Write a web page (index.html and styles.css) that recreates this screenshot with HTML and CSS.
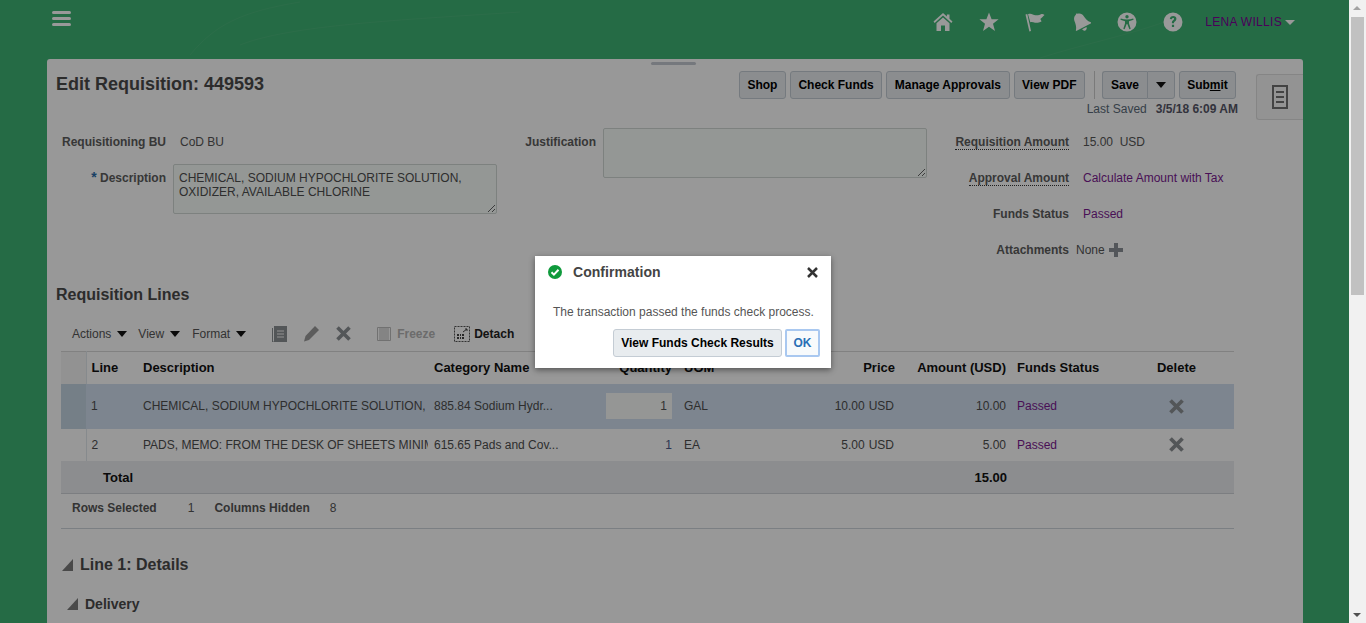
FILE: index.html
```html
<!DOCTYPE html>
<html lang="en">
<head>
<meta charset="utf-8">
<title>Edit Requisition: 449593</title>
<link rel="stylesheet" href="styles.css">
</head>
<body>
<div class="page">
  <svg class="swoosh" width="1349" height="59" viewBox="0 0 1349 59"><path d="M190 55C215 25 240 12 300 2M240 45C290 25 400 20 520 12M1040 58C1080 45 1130 35 1170 20"/></svg>
  <header class="topbar">
    <div class="burger"><span></span><span></span><span></span></div>
    <nav class="topnav">
      <svg class="navicon" viewBox="0 0 20 20"><path d="M10 1 0.500 9.500l1.200 1.400L10 3.600l8.300 7.300 1.200-1.400L16.500 6.800V2.500h-2.600v2z"/><path d="M3.500 11.300 10 5.500l6.500 5.800V19h-4.500v-5.500H8V19H3.500z"/></svg>
      <svg class="navicon" viewBox="0 0 20 20"><path d="M10 .500l2.600 6.700h7l-5.600 4.500 2 7.300-6-4.200-6 4.200 2-7.300L.400 7.200h7z"/></svg>
      <svg class="navicon" viewBox="0 0 20 20"><path d="M.500 2.500 2.300 2 6 19l-1.600.5z"/><path d="M3 2.200C6 .800 8 2.800 10.500 3.200c2 .3 4.500-.3 6-1.200 1 0 2.300.4 3 .9-1.300 1.300-3.200 3-4.200 4.100.6 1 1 1.600 1.200 2.400-2 1-4.500 1.700-6.500 1.300-1.600-.3-3-.9-4.700-.4z"/></svg>
      <svg class="navicon" viewBox="0 0 20 20"><g transform="rotate(-28 10 10)"><path d="M8.800 .500c.8-.5 1.800-.2 2.100.7 2.700.5 4 2.500 4.300 5 .3 3 .800 6 3.300 8.600.3.500 0 1-.6 1H2.100c-.6 0-.9-.5-.5-1 2.300-2.600 2.800-5.600 3.100-8.600.3-2.500 1.700-4.500 4.300-5 0-.3.200-.5.400-.7z"/><path d="M7.500 17h5c-.2 1.500-1.200 2.500-2.500 2.500S7.700 18.500 7.500 17z"/></g></svg>
      <svg class="navicon" viewBox="0 0 20 20"><path fill-rule="evenodd" d="M10 0.500a9.500 9.500 0 1 1 0 19 9.500 9.500 0 0 1 0-19zM10 3a1.700 1.700 0 1 0 0 3.400A1.700 1.700 0 0 0 10 3zM3.800 6.400l-.4 1.300 4.600 1.500v2.400l-1.700 5.200 1.300.5L9.700 12h.6l2.100 5.300 1.300-.5-1.700-5.200V9.200l4.600-1.500-.4-1.300c-2 .6-4 1.100-6.200 1.100S5.800 7 3.800 6.400z"/></svg>
      <svg class="navicon" viewBox="0 0 20 20"><path fill-rule="evenodd" d="M10 0.500a9.500 9.500 0 1 1 0 19 9.500 9.500 0 0 1 0-19zM10.200 4C8.300 4 7 5 6.800 6.900l2.200.3c.1-.9.500-1.300 1.100-1.300.6 0 1 .4 1 .9 0 .6-.4.900-1 1.400-.9.700-1.200 1.300-1.200 2.500v.6h2.100v-.4c0-.6.200-.9.900-1.400.9-.7 1.500-1.400 1.500-2.700C13.400 5 12.100 4 10.200 4zM8.900 12.800V15h2.200v-2.200z"/></svg>
      <span class="user">LENA WILLIS<i class="usercaret"></i></span>
    </nav>
  </header>

  <main class="panel">
    <div class="handle"></div>
    <div class="drawer">
      <svg width="16" height="24" viewBox="0 0 16 24"><path fill="none" stroke="#707070" stroke-width="2" d="M1 1h14v22H1zM4 7h8M4 12h8M4 17h8"/></svg>
    </div>

    <div class="head">
      <h1 class="title">Edit Requisition: 449593</h1>
      <div class="actions">
        <div class="btnrow">
          <button class="btn">Shop</button>
          <button class="btn">Check Funds</button>
          <button class="btn">Manage Approvals</button>
          <button class="btn">View PDF</button>
          <span class="vsep"></span>
          <div class="split"><button class="btn save">Save</button><button class="btn drop"><i class="caret"></i></button></div>
          <button class="btn submit">Sub<u>m</u>it</button>
        </div>
        <div class="saved"><span>Last Saved</span><span class="savedate">3/5/18 6:09 AM</span></div>
      </div>
    </div>

    <section class="form">
      <div class="fcol fleft">
        <div class="frow short"><label class="lab">Requisitioning BU</label><span class="val bu">CoD BU</span></div>
        <div class="frow top"><label class="lab"><b class="req">*</b> Description</label><textarea class="area" readonly>CHEMICAL, SODIUM HYPOCHLORITE SOLUTION, OXIDIZER, AVAILABLE CHLORINE</textarea></div>
      </div>
      <div class="fcol fmid">
        <div class="frow top"><label class="lab">Justification</label><textarea class="area" readonly></textarea></div>
      </div>
      <div class="fcol fright">
        <div class="rrow"><span class="lab dotted">Requisition Amount</span><span class="val">15.00&nbsp; USD</span></div>
        <div class="rrow"><span class="lab dotted">Approval Amount</span><span class="val link">Calculate Amount with Tax</span></div>
        <div class="rrow"><span class="lab">Funds Status</span><span class="val link">Passed</span></div>
        <div class="rrow attach"><span class="lab">Attachments</span><span class="val">None</span>
          <svg class="plus" width="14" height="14" viewBox="0 0 14 14"><path fill="#8b9096" d="M5 0h4v5h5v4H9v5H5V9H0V5h5z"/></svg></div>
      </div>
    </section>

    <h2 class="lines">Requisition Lines</h2>

    <div class="toolbar">
      <span class="menu m1">Actions<i class="caret"></i></span>
      <span class="menu m2">View<i class="caret"></i></span>
      <span class="menu m3">Format<i class="caret"></i></span>
      <svg class="tool t1" width="15" height="16" viewBox="0 0 15 16"><path fill="#8b8f93" d="M2 0h13v16H2z"/><path fill="none" stroke="#8b8f93" d="M.5 2v14h2"/><path stroke="#f5f5f5" stroke-width="1.200" d="M5 5h7M5 8h7M5 11h7"/></svg>
      <svg class="tool t2" width="17" height="17" viewBox="0 0 17 17"><path fill="#9a9a9a" d="M12 1l4 4L6 15l-5 1.500L2.500 11z"/></svg>
      <svg class="tool t3" width="15" height="15" viewBox="0 0 15 15"><path stroke="#8b8f93" stroke-width="3.600" d="M1.500 1.500l12 12M13.500 1.500l-12 12"/></svg>
      <span class="freeze"><svg width="14" height="14" viewBox="0 0 14 14"><path fill="none" stroke="#bdbdbd" d="M.5.500h13v13H.5zM5 1v12M7 1v12M9 1v12M11 1v12M3 1v12"/></svg>Freeze</span>
      <span class="detach"><svg width="16" height="16" viewBox="0 0 16 16"><path fill="none" stroke="#555" stroke-dasharray="2 1" d="M.5.500h15v15H.5z"/><path fill="#444" d="M3 8h7v5H3z"/><path stroke="#fff" d="M3 10.500h7M5.500 8v5M7.500 8v5"/><path stroke="#444" d="M9 6l4-3M11 3h2v2" fill="none"/></svg>Detach</span>
    </div>

    <table class="grid">
      <colgroup><col class="c0"><col class="c1"><col class="c2"><col class="c3"><col class="c4"><col class="c5"><col class="c6"><col class="c7"><col class="c8"><col class="c9"></colgroup>
      <thead>
        <tr><th class="sel"></th><th class="ln">Line</th><th>Description</th><th>Category Name</th><th class="r qtyc">Quantity</th><th>UOM</th><th class="r ph">Price</th><th class="r">Amount (USD)</th><th class="fs">Funds Status</th><th class="c">Delete</th></tr>
      </thead>
      <tbody>
        <tr class="selrow"><td class="sel"></td><td class="ln">1</td><td>CHEMICAL, SODIUM HYPOCHLORITE SOLUTION, OXIDIZER, AVAILABLE CHLORINE</td><td>885.84 Sodium Hydr...</td><td class="r qtyc"><input class="qty" value="1"></td><td>GAL</td><td class="r">10.00<span class="cur">USD</span></td><td class="r">10.00</td><td class="link fs">Passed</td><td class="c"><svg class="del" width="15" height="15" viewBox="0 0 15 15"><path stroke="#8b8f93" stroke-width="3.800" d="M1.500 1.500l12 12M13.500 1.500l-12 12"/></svg></td></tr>
        <tr class="row2"><td class="sel"></td><td class="ln">2</td><td>PADS, MEMO: FROM THE DESK OF SHEETS MINIMUM PER PAD</td><td>615.65 Pads and Cov...</td><td class="r qtyc qtyv">1</td><td>EA</td><td class="r">5.00<span class="cur">USD</span></td><td class="r">5.00</td><td class="link fs">Passed</td><td class="c"><svg class="del" width="15" height="15" viewBox="0 0 15 15"><path stroke="#8b8f93" stroke-width="3.800" d="M1.500 1.500l12 12M13.500 1.500l-12 12"/></svg></td></tr>
      </tbody>
      <tfoot>
        <tr><td class="tot" colspan="7">Total</td><td class="r totv">15.00</td><td colspan="2"></td></tr>
      </tfoot>
    </table>

    <div class="status"><span class="st1">Rows Selected</span><span class="st2">1</span><span class="st3">Columns Hidden</span><span class="st4">8</span></div>

    <h2 class="sec1"><svg width="11" height="12" viewBox="0 0 11 12"><path fill="#7a7a7a" d="M11 0v12H0z"/></svg>Line 1: Details</h2>
    <h3 class="sec2"><svg width="11" height="12" viewBox="0 0 11 12"><path fill="#7a7a7a" d="M11 0v12H0z"/></svg>Delivery</h3>
  </main>

  <div class="mask"></div>

  <div class="dialog">
    <div class="dhead">
      <svg width="14" height="14" viewBox="0 0 14 14"><circle cx="7" cy="7" r="7" fill="#0f9a3c"/><path fill="none" stroke="#fff" stroke-width="2" d="M3.500 7.300l2.400 2.300 4.600-4.800"/></svg>
      <span class="dtitle">Confirmation</span>
      <svg class="dclose" width="11" height="11" viewBox="0 0 11 11"><path stroke="#333" stroke-width="2.500" d="M1 1l9 9M10 1l-9 9"/></svg>
    </div>
    <p class="dmsg">The transaction passed the funds check process.</p>
    <div class="dbtns"><button class="btn dbtn">View Funds Check Results</button><button class="btn ok">OK</button></div>
  </div>
</div>
<aside class="scrollbar">
  <i class="arrow up"></i>
  <div class="thumb"></div>
  <i class="arrow down"></i>
</aside>
</body>
</html>
```
FILE: styles.css
```css
* { box-sizing: border-box; }
html, body { margin: 0; height: 623px; overflow: hidden; }
body { display: flex; width: 1366px; font: 12px "Liberation Sans", Arial, sans-serif; color: #4d4d4d; }

.page { position: relative; width: 1349px; height: 623px; overflow: hidden; background: #3fb273; flex: none; }
.swoosh { position: absolute; left: 0; top: 0; }
.swoosh path { fill: none; stroke: rgba(255,255,255,.05); stroke-width: 1; }

.topbar { position: relative; display: flex; justify-content: space-between; height: 59px; padding: 11px 54px 0 52px; }
.burger { display: flex; flex-direction: column; gap: 3px; width: 19px; }
.burger span { height: 3px; border-radius: 2px; background: #fff; }
.topnav { display: flex; align-items: flex-start; gap: 26px; padding-top: 1px; }
.navicon { width: 20px; height: 20px; fill: #fff; }
.user { display: flex; align-items: center; margin-left: -4px; height: 20px; color: #7d0096; font-size: 12px; letter-spacing: .3px; }
.usercaret { width: 0; height: 0; margin-left: 3px; border: 5px solid transparent; border-top: 5px solid #fff; border-bottom: 0; }

.panel { position: relative; width: 1256px; height: 564px; margin-left: 47px; padding: 12px 0 0 9px; background: #fdfdfd; border-radius: 3px 3px 0 0; }
.handle { position: absolute; left: 604px; top: 3px; width: 45px; height: 3px; border-radius: 2px; background: #c4c8d0; }
.drawer { position: absolute; right: 0; top: 15px; display: flex; align-items: center; justify-content: center; width: 47px; height: 46px; border: 1px solid #dedede; border-right: 0; border-radius: 3px 0 0 3px; background: #f5f5f5; }

.head { display: flex; justify-content: space-between; height: 52px; padding-right: 65px; }
.title { margin: 2px 0 0; font-size: 18px; line-height: 22px; font-weight: bold; color: #4a4a4a; }
.actions { display: flex; flex-direction: column; align-items: flex-end; }
.btnrow { display: flex; gap: 4px; padding-right: 2px; }
.btn { height: 28px; padding: 0 7.5px; border: 1px solid #c4ccd4; border-radius: 3px; background: #e8ecef; color: #000; font: bold 12px "Liberation Sans", Arial, sans-serif; }
.submit { width: 57px; padding: 0; }
.vsep { width: 1px; margin: 0 3px 0 5px; background: #ccc; }
.split { display: flex; }
.split .save { width: 45px; padding: 0; border-radius: 3px 0 0 3px; border-right: 0; }
.split .drop { display: flex; align-items: center; justify-content: center; width: 28px; padding: 0; border-radius: 0 3px 3px 0; }
.caret { display: inline-block; width: 0; height: 0; border: 5px solid transparent; border-top: 6px solid #111; border-bottom: 0; }
.saved { display: flex; gap: 9px; margin-top: 3px; line-height: 14px; color: #5a6a78; }
.savedate { font-weight: bold; color: #556; }

.form { display: flex; height: 162px; margin-left: 5px; }
.fcol { display: flex; flex-direction: column; }
.frow { display: flex; gap: 7px; }
.frow .lab { text-align: right; }
.frow.short { height: 36px; padding-top: 12px; gap: 14px; margin-bottom: 5px; }
.frow.short .lab { width: 105px; }
.frow.top .lab { padding-top: 5px; }
.fleft { width: 436px; }
.fleft .frow.top .lab { width: 105px; }
.fmid { width: 430px; padding-top: 5px; }
.fmid .lab { width: 99px; }
.fmid .frow.top .lab { padding-top: 7px; }
.lab { font-weight: bold; color: #5c5c5c; white-space: nowrap; }
.req { color: #2a6ca8; font-size: 14px; }
.val { color: #555; }
.area { display: block; flex: none; width: 324px; height: 50px; padding: 6px 5px; border: 1px solid #d0d8d4; border-radius: 2px; background: #f7fcf9; color: #4d4d4d; font: 12px/14px "Liberation Sans", Arial, sans-serif; }
.fright { width: 319px; padding-top: 1px; }
.rrow { display: flex; align-items: center; height: 36px; gap: 14px; }
.rrow .lab { width: 142px; text-align: right; }
.rrow .lab.dotted { width: auto; margin-left: auto; border-bottom: 1px dotted #333; line-height: 14px; }
.rrow .dotted + .val { width: 163px; }
.attach { gap: 7px; }
.plus { margin-left: -3px; }
.link { color: #7a1a90; }

.lines { margin: 0; height: 31px; font-size: 16px; line-height: 20px; font-weight: bold; color: #4a4a4a; }

.toolbar { display: flex; align-items: center; height: 35px; padding-left: 16px; }
.menu { display: flex; align-items: center; gap: 6px; color: #555; }
.m1 { margin-right: 11px; }
.m2 { margin-right: 12px; }
.m3 { margin-right: 26px; }
.t2 { margin-left: 16px; }
.t3 { margin-left: 16px; }
.freeze { display: flex; align-items: center; gap: 6px; margin-left: 26px; font-weight: bold; color: #b4b4b4; }
.detach { display: flex; align-items: center; gap: 4px; margin-left: 19px; font-weight: bold; color: #222; }

.grid { width: 1173px; margin-left: 5px; table-layout: fixed; border-collapse: collapse; border-top: 1px solid #d8d8d8; }
.c0 { width: 25px; } .c1 { width: 51px; } .c2 { width: 291px; } .c3 { width: 137px; } .c4 { width: 113px; }
.c5 { width: 82px; } .c6 { width: 140px; } .c7 { width: 112px; } .c8 { width: 110px; } .c9 { width: 112px; }
.grid th, .grid td { padding: 0 6px; overflow: hidden; white-space: nowrap; text-align: left; }
.grid th { height: 32px; font-weight: bold; font-size: 13px; color: #111; }
.grid .r { text-align: right; }
.grid .c { padding: 0 8px 0 5px; text-align: center; }
.grid .fs, .grid .ln { padding-left: 5px; }
.grid .ph { padding-right: 5px; }
.cur { margin-left: 4px; }
.grid .sel { padding: 0; border-right: 1px solid #dfe6ec; background: #f4f4f4; }
.selrow td { height: 45px; background: #d0deee; }
.selrow .sel { background: #c4d4e2; border-right: 0; }
.row2 td { height: 32px; }
.row2 .sel { background: #fdfdfd; }
.qty { width: 66px; height: 26px; padding: 0 5px; border: 0; background: #f8fbf8; color: #555; text-align: right; font: 12px "Liberation Sans", Arial, sans-serif; }
.qtyv { color: #4a5a8a; }
.del { display: block; margin: 0 auto; }
.grid tfoot td { height: 33px; padding-top: 1px; background: #e9ebee; border-bottom: 1px solid #cfd3d8; font-size: 13px; font-weight: bold; color: #111; }
.grid tfoot .tot { padding-left: 42px; }
.grid tfoot .totv { padding-right: 5px; }

.status { display: flex; align-items: center; width: 1173px; height: 35px; margin-left: 5px; padding: 0 0 7px 11px; border-bottom: 1px solid #cdd4da; color: #555; }
.st1, .st3 { font-weight: bold; }
.st2 { margin-left: 31px; }
.st3 { margin-left: 20px; }
.st4 { margin-left: 20px; }

.sec1 { display: flex; align-items: center; gap: 7px; margin: 26px 0 0 6px; height: 20px; font-size: 16px; font-weight: bold; color: #4a4a4a; }
.sec2 { display: flex; align-items: center; gap: 7px; margin: 20px 0 0 11px; height: 18px; font-size: 14px; font-weight: bold; color: #4a4a4a; }

.mask { position: absolute; inset: 0; background: rgba(0,0,0,.4); }

.dialog { position: absolute; left: 535px; top: 256px; width: 296px; height: 112px; padding: 0 11px 0 13px; background: #fff; box-shadow: 0 2px 6px rgba(0,0,0,.45); }
.dhead { display: flex; align-items: center; height: 32px; }
.dtitle { margin-left: 11px; font-size: 14px; font-weight: bold; color: #444; letter-spacing: .05px; }
.dclose { margin-left: auto; margin-right: 2px; }
.dmsg { margin: 17px 0 0 5px; line-height: 14px; font-size: 12px; color: #555; }
.dbtns { display: flex; justify-content: flex-end; gap: 3px; margin-top: 10px; }
.dbtn { width: 169px; padding: 0; }
.ok { width: 35px; padding: 0; border: 2px solid #a9c8f0; border-radius: 2px; background: #f7fafc; color: #2a6fb5; }

.scrollbar { position: relative; flex: none; width: 17px; height: 623px; background: #f1f1f1; }
.thumb { position: absolute; left: 2px; top: 17px; width: 13px; height: 278px; background: #c1c1c1; }
.arrow { position: absolute; left: 4px; width: 0; height: 0; border: 4px solid transparent; }
.arrow.up { top: 6px; border-top: 0; border-bottom: 4px solid #a3a3a3; }
.arrow.down { bottom: 6px; border-bottom: 0; border-top: 4px solid #505050; }
```
